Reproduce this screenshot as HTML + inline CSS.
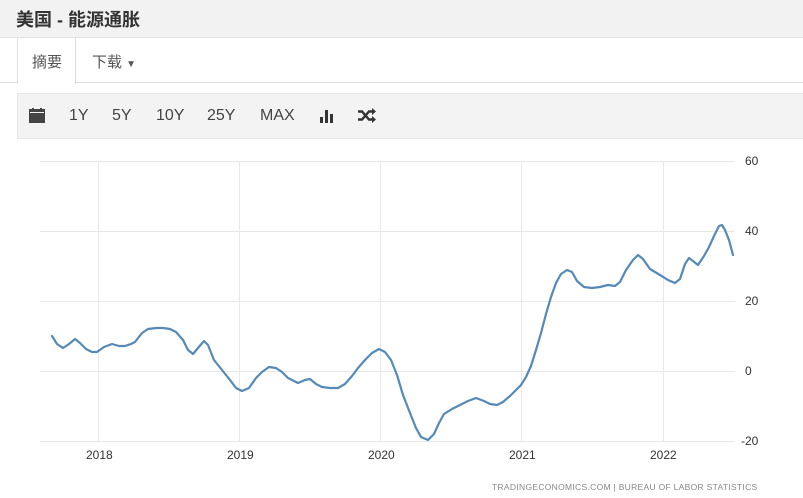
<!DOCTYPE html>
<html><head><meta charset="utf-8"><style>
*{margin:0;padding:0;box-sizing:border-box}
body{width:803px;height:498px;background:#fff;font-family:"Liberation Sans","Noto Sans CJK SC",sans-serif;position:relative;overflow:hidden;color:#333}
.hdr{position:absolute;left:0;top:0;width:803px;height:38px;background:#f2f2f2;border-bottom:1px solid #e3e3e3}
.hdr h1{position:absolute;left:16px;top:6px;font-size:18px;font-weight:bold;color:#333}
.tabs{position:absolute;left:0;top:38px;width:803px;height:45px;background:#fff;border-bottom:1px solid #ddd}
.t1{position:absolute;left:17px;top:0;width:59px;height:46px;border-left:1px solid #ddd;border-right:1px solid #ddd;background:#fff;font-size:15px;padding:13px 0 0 14px;color:#555}
.t2{position:absolute;left:92px;top:13px;font-size:15px;color:#555}
.tool{position:absolute;left:17px;top:93px;width:786px;height:46px;background:#f3f3f3;border:1px solid #e6e6e6;border-right:none}
.tool span{position:absolute;top:13px;font-size:16px;color:#444}
</style></head><body>
<div class="hdr"><h1>美国 - 能源通胀</h1></div>
<div class="tabs"><div class="t1">摘要</div><div class="t2">下载 <span style="font-size:10px">▼</span></div></div>
<div class="tool">
<svg style="position:absolute;left:11px;top:14px" width="16" height="15" viewBox="0 0 16 15"><rect x="0" y="1" width="16" height="14" fill="#444"/><rect x="1" y="4" width="14" height="1" fill="#f3f3f3"/><rect x="3" y="0" width="2" height="3" fill="#444"/><rect x="11" y="0" width="2" height="3" fill="#444"/></svg>
<span style="left:51px">1Y</span><span style="left:94px">5Y</span><span style="left:138px">10Y</span><span style="left:189px">25Y</span><span style="left:242px">MAX</span>
<svg style="position:absolute;left:301px;top:14px" width="16" height="15" viewBox="0 0 16 15"><rect x="1" y="9" width="3" height="6" fill="#333"/><rect x="6" y="2" width="3" height="13" fill="#333"/><rect x="11" y="6" width="3" height="9" fill="#333"/></svg>
<svg style="position:absolute;left:340px;top:14px" width="18" height="15" viewBox="0 0 18 15" fill="none" stroke="#333" stroke-width="2.4"><path d="M0 3.5h4l7 8h4M0 11.5h4l7-8h4"/><path d="M14 0l4 3.5-4 3.5zM14 8l4 3.5-4 3.5z" fill="#333" stroke="none"/></svg>
</div>
<svg style="position:absolute;left:0;top:0" width="803" height="498">
<g stroke="#e8e8e8" stroke-width="1">
<path d="M40 161.5H735M40 231.5H735M40 301.5H735M40 371.5H735M40 441.5H735"/>
<path d="M98.5 161V441M239.5 161V441M380.5 161V441M521.5 161V441M663.5 161V441"/>
</g>
<g font-family="Liberation Sans,sans-serif" font-size="12" fill="#333">
<text x="745" y="165">60</text><text x="745" y="235">40</text><text x="745" y="305">20</text><text x="745" y="375">0</text><text x="741" y="445">-20</text>
<text x="86" y="459">2018</text><text x="227" y="459">2019</text><text x="368" y="459">2020</text><text x="509" y="459">2021</text><text x="650" y="459">2022</text>
<text x="492" y="490" font-size="8.5" fill="#888" letter-spacing="0.3">TRADINGECONOMICS.COM  |  BUREAU OF LABOR STATISTICS</text>
</g>
<polyline fill="none" stroke="#5589b8" stroke-width="2.2" stroke-linejoin="round" stroke-linecap="round" points="52,336 57,344 63,348 69,344 75,339 80,343 86,349 92,352 97,352 104,347 112,344 119,346 125,346 131,344 135,342 142,333 148,329 156,328 163,328 170,329 176,332 183,340 188,350 193,354 198,348 204,341 208,345 214,360 222,370 230,380 236,388 242,391 249,388 256,378 262,372 269,367 276,368 282,372 288,378 298,383 305,380 310,379 316,384 322,387 330,388 338,388 345,384 352,376 358,368 365,360 372,353 379,349 385,352 391,360 397,375 403,395 410,413 416,428 421,437 428,440 434,434 439,423 444,414 452,409 460,405 468,401 476,398 484,401 490,404 497,405 503,402 510,396 516,390 521,385 526,377 531,366 536,350 541,333 546,314 551,297 556,283 561,274 567,270 572,272 577,281 584,287 592,288 600,287 608,285 615,286 620,282 626,270 633,260 638,255 643,259 650,269 660,275 668,280 675,283 680,279 685,264 689,258 693,261 698,265 704,256 709,247 714,236 719,226 722,225 725,230 729,240 733,255"/>
</svg>
</body></html>
